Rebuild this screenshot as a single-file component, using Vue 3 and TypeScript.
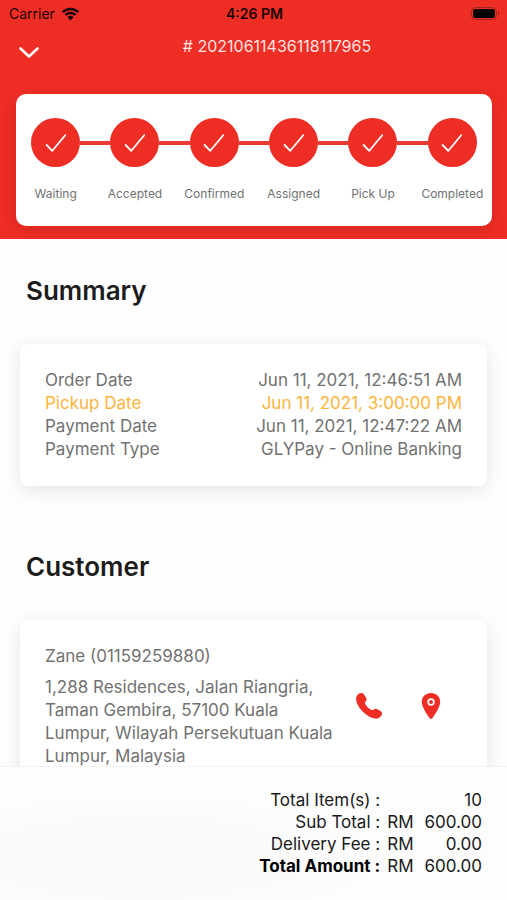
<script setup lang="ts">
interface SummaryRow {
  label: string
  value: string
  highlight?: boolean
}

interface TotalRow {
  label: string
  currency: string
  value: string
  strong?: boolean
}

const orderNumber = '20210611436118117965'

const steps: string[] = ['Waiting', 'Accepted', 'Confirmed', 'Assigned', 'Pick Up', 'Completed']

const summary: SummaryRow[] = [
  { label: 'Order Date', value: 'Jun 11, 2021, 12:46:51 AM' },
  { label: 'Pickup Date', value: 'Jun 11, 2021, 3:00:00 PM', highlight: true },
  { label: 'Payment Date', value: 'Jun 11, 2021, 12:47:22 AM' },
  { label: 'Payment Type', value: 'GLYPay - Online Banking' },
]

const totals: TotalRow[] = [
  { label: 'Total Item(s) :', currency: '', value: '10' },
  { label: 'Sub Total :', currency: 'RM', value: '600.00' },
  { label: 'Delivery Fee :', currency: 'RM', value: '0.00' },
  { label: 'Total Amount :', currency: 'RM', value: '600.00', strong: true },
]
</script>

<template>
  <div class="screen">
    <header class="header">
      <div class="status">
        <div class="carrier">
          <span>Carrier</span>
          <svg class="wifi" viewBox="0 0 18 14" aria-hidden="true">
            <path d="M1.2 5.1a11.2 11.2 0 0 1 15.6 0" />
            <path d="M3.9 8a7.4 7.4 0 0 1 10.2 0" />
            <path class="dot" d="M6 10.2a4.4 4.4 0 0 1 6 0L9 13.4z" />
          </svg>
        </div>
        <span class="time">4:26 PM</span>
        <svg class="battery" viewBox="0 0 29 14" aria-hidden="true">
          <rect class="shell" x="0.5" y="0.5" width="25" height="12" rx="4" />
          <rect x="2" y="2" width="22" height="9" rx="2.5" />
          <path class="cap" d="M27 4.5c1.8.6 1.8 3.4 0 4z" />
        </svg>
      </div>

      <div class="titlebar">
        <button class="back" type="button" aria-label="Close">
          <svg viewBox="0 0 22 14" aria-hidden="true">
            <path d="M2.5 2.5 11 10.5 19.5 2.5" />
          </svg>
        </button>
        <h1 class="order"># {{ orderNumber }}</h1>
      </div>

      <ol class="steps">
        <li v-for="step in steps" :key="step" class="step">
          <span class="circle">
            <svg viewBox="0 0 24 24" aria-hidden="true">
              <path d="M2.6 14 8.3 19.8 21.2 4.2" />
            </svg>
          </span>
          <span class="step-label">{{ step }}</span>
        </li>
      </ol>
    </header>

    <main class="content">
      <section class="section">
        <h2>Summary</h2>
        <dl class="card">
          <div v-for="row in summary" :key="row.label" class="row" :class="{ highlight: row.highlight }">
            <dt>{{ row.label }}</dt>
            <dd>{{ row.value }}</dd>
          </div>
        </dl>
      </section>

      <section class="section">
        <h2>Customer</h2>
        <div class="card customer">
          <p class="name">Zane (01159259880)</p>
          <div class="details">
            <address>
              1,288 Residences, Jalan Riangria, Taman Gembira, 57100 Kuala Lumpur, Wilayah Persekutuan Kuala
              Lumpur, Malaysia
            </address>
            <div class="actions">
              <a href="tel:01159259880" aria-label="Call customer">
                <svg viewBox="0 0 28 28" aria-hidden="true">
                  <path
                    d="M4.200 1.600C5.800 .6 7.800 .9 9 2.500L11 5.500C11.900 7 11.700 8.300 10.700 9.400C9.900 10.300 9.800 11.200 10.400 12.200C11.900 14.700 13.700 16.400 16.200 17.700C17.100 18.200 17.900 18.100 18.700 17.500C19.900 16.600 21.100 16.600 22.400 17.300L25.500 19.100C27.200 20.200 27.500 21.900 26.400 23.600C25 25.900 22.700 27 20 26.600C15.900 26 11.300 23.200 7.500 19.300C3.900 15.500 1.500 11.200 1.100 7.400C.9 4.800 2 2.900 4.200 1.600Z"
                  />
                </svg>
              </a>
              <a href="#map" aria-label="Show on map">
                <svg viewBox="0 0 28 28" aria-hidden="true">
                  <path
                    fill-rule="evenodd"
                    d="M14 1C8.800 1 4.800 4.700 4.800 9.700C4.800 15 9.400 21.500 12.800 26.200C13.500 27.200 14.500 27.200 15.200 26.200C18.600 21.500 23.200 15 23.200 9.700C23.200 4.700 19.200 1 14 1ZM14 6.300A3.700 3.700 0 1 1 14 13.700A3.700 3.700 0 1 1 14 6.300Z"
                  />
                  <circle cx="14" cy="10" r="2" />
                </svg>
              </a>
            </div>
          </div>
        </div>
      </section>
    </main>

    <footer class="footer">
      <table class="totals">
        <tbody>
          <tr v-for="row in totals" :key="row.label">
            <th scope="row" :class="{ strong: row.strong }">{{ row.label }}</th>
            <td class="currency">{{ row.currency }}</td>
            <td class="amount">{{ row.value }}</td>
          </tr>
        </tbody>
      </table>
    </footer>
  </div>
</template>

<style>
body {
  margin: 0;
  background: #fff;
}
</style>

<style scoped>
.screen {
  display: flex;
  flex-direction: column;
  height: 100vh;
  background: #fefefe;
  color: #727272;
  font-family: Inter, 'Liberation Sans', sans-serif;
  font-size: 17px;
  line-height: 23px;
}

.header {
  flex: none;
  padding: 0 15px 13px 16px;
  background: #ee2d24;
}

.status {
  display: grid;
  grid-template-columns: 1fr auto 1fr;
  align-items: center;
  height: 27px;
  margin: 0 -8px 0 -7px;
  color: #1c0403;
  font-size: 14px;
}

.carrier {
  display: flex;
  align-items: center;
  gap: 6px;
}

.wifi {
  width: 19px;
  height: 14px;
  fill: none;
  stroke: #1c0403;
  stroke-width: 2.4;
}

.wifi .dot {
  fill: #1c0403;
  stroke: none;
}

.time {
  font-weight: 600;
}

.battery {
  justify-self: end;
  width: 29px;
  height: 14px;
  fill: #000;
}

.battery .shell {
  fill: none;
  stroke: #a5231d;
}

.battery .cap {
  fill: #a5231d;
}

.titlebar {
  display: grid;
  grid-template-columns: 46px 1fr;
  align-items: center;
  height: 39px;
}

.back {
  display: flex;
  justify-self: start;
  padding: 12px 2px 0;
  border: 0;
  background: none;
  cursor: pointer;
}

.back svg {
  width: 22px;
  height: 14px;
  fill: none;
  stroke: #fff;
  stroke-width: 2.6;
  stroke-linecap: round;
  stroke-linejoin: round;
}

.order {
  margin: 0;
  color: #ffe3e1;
  font-size: 16px;
  font-weight: 400;
  text-align: center;
}

.steps {
  display: grid;
  grid-template-columns: repeat(6, minmax(0, 1fr));
  margin: 28px 0 0;
  padding: 24px 0;
  border-radius: 10px;
  background: #fff;
  box-shadow: 0 4px 16px rgba(0, 0, 0, 0.1);
  list-style: none;
}

.step {
  display: grid;
  grid-template-columns: 1fr 49px 1fr;
  align-items: center;
  row-gap: 19px;
}

.step::before,
.step::after {
  content: '';
  grid-row: 1;
  height: 4px;
  background: #e93a33;
}

.step::before {
  grid-column: 1;
}

.step::after {
  grid-column: 3;
}

.step:first-child::before,
.step:last-child::after {
  background: none;
}

.circle {
  grid-column: 2;
  grid-row: 1;
  display: grid;
  place-items: center;
  height: 49px;
  border-radius: 50%;
  background: #ee2d24;
}

.circle svg {
  width: 24px;
  height: 24px;
  fill: none;
  stroke: #fff;
  stroke-width: 1.8;
  stroke-linecap: round;
  stroke-linejoin: round;
}

.step-label {
  grid-column: 1 / -1;
  grid-row: 2;
  font-size: 12px;
  line-height: 16px;
  text-align: center;
  white-space: nowrap;
}

.content {
  flex: 1;
  min-height: 0;
  padding: 0 20px;
  overflow-y: auto;
  scrollbar-width: none;
}

.section {
  padding-top: 36px;
  margin-bottom: 45px;
}

.section + .section {
  padding-top: 20px;
}

h2 {
  margin: 0 6px 37px;
  color: #1c1c1c;
  font-size: 26px;
  font-weight: 600;
  line-height: 32px;
}

.card {
  margin: 0;
  padding: 25px;
  border-radius: 8px;
  background: #fff;
  box-shadow: 0 4px 18px rgba(0, 0, 0, 0.1);
}

.row {
  display: flex;
  justify-content: space-between;
}

.row.highlight {
  color: #fdb43c;
}

dd {
  margin: 0;
  text-align: right;
}

.name {
  margin: 0 0 8px;
}

.details {
  display: grid;
  grid-template-columns: 288px auto;
  justify-content: space-between;
}

address {
  font-style: normal;
}

.actions {
  display: flex;
  gap: 34px;
  padding: 16px 17px 0 0;
}

.actions svg {
  display: block;
  width: 28px;
  height: 28px;
  fill: #ee2d24;
}

.footer {
  flex: none;
  display: flex;
  justify-content: flex-end;
  padding: 22px 25px 23px;
  border-top: 1px solid #f3f3f3;
  background: radial-gradient(ellipse at 28% 68%, #f9f9f9 20%, #fdfdfd 45%);
}

.totals {
  border-collapse: collapse;
  color: #1a1a1a;
  line-height: 22px;
}

.totals th,
.totals td {
  padding: 0;
  font-weight: 400;
  text-align: right;
}

.totals th.strong {
  color: #000;
  font-weight: 700;
}

.totals .currency {
  padding: 0 11px 0 7px;
}
</style>
